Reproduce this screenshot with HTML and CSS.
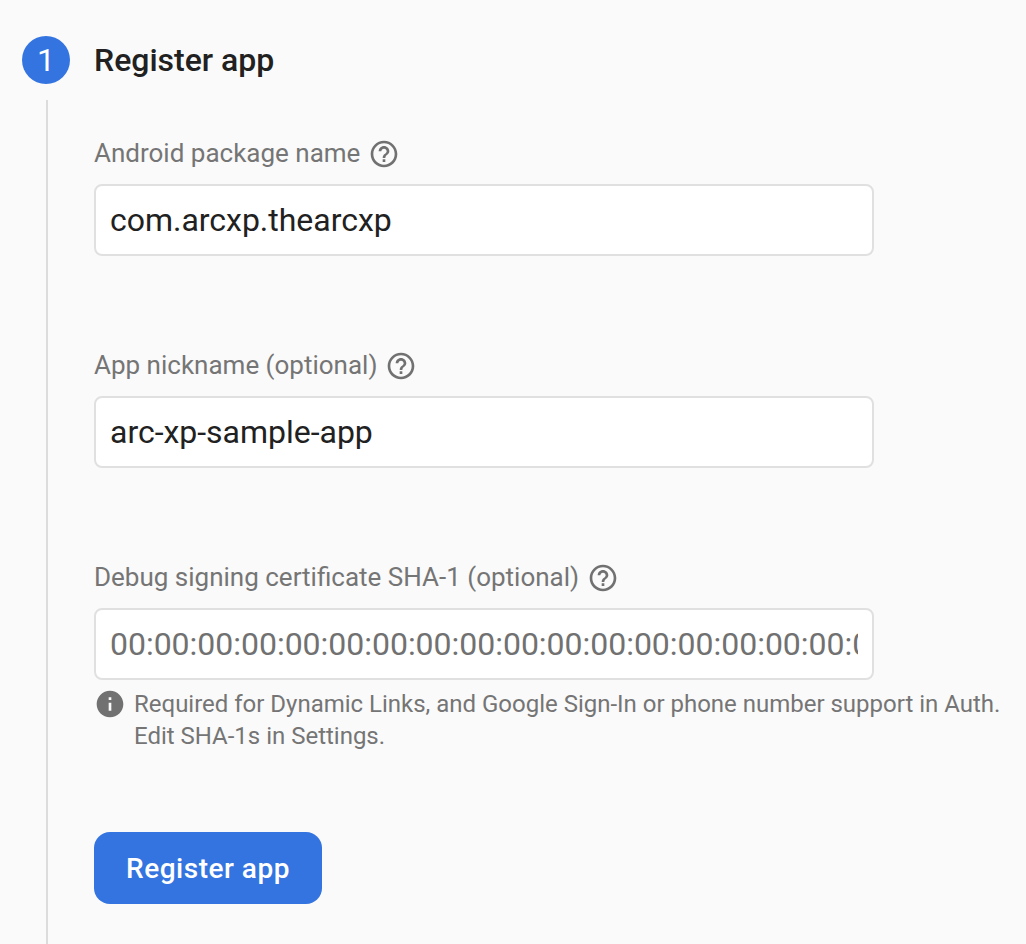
FILE: index.html
```
<!DOCTYPE html>
<html lang="en">
<head>
<meta charset="utf-8">
<title>Register app</title>
<link rel="stylesheet" href="styles.css">
</head>
<body>
<main class="step">
  <div class="rail">
    <span class="number">1</span>
    <span class="line"></span>
  </div>
  <form class="content">
    <h1 class="title">Register app</h1>
    <div class="field">
      <label class="label" for="pkg"><span class="label-text">Android package name</span>
        <svg class="help" viewBox="0 0 24 24"><path d="M11 18h2v-2h-2v2zm1-16C6.48 2 2 6.48 2 12s4.48 10 10 10 10-4.48 10-10S17.52 2 12 2zm0 18c-4.41 0-8-3.59-8-8s3.59-8 8-8 8 3.59 8 8-3.59 8-8 8zm0-14c-2.21 0-4 1.79-4 4h2c0-1.1.9-2 2-2s2 .9 2 2c0 2-3 1.75-3 5h2c0-2.25 3-2.5 3-5 0-2.21-1.79-4-4-4z"/></svg>
      </label>
      <input class="input" id="pkg" type="text" value="com.arcxp.thearcxp">
    </div>
    <div class="field">
      <label class="label" for="nick"><span class="label-text">App nickname (optional)</span>
        <svg class="help" viewBox="0 0 24 24"><path d="M11 18h2v-2h-2v2zm1-16C6.48 2 2 6.48 2 12s4.48 10 10 10 10-4.48 10-10S17.52 2 12 2zm0 18c-4.41 0-8-3.59-8-8s3.59-8 8-8 8 3.59 8 8-3.59 8-8 8zm0-14c-2.21 0-4 1.79-4 4h2c0-1.1.9-2 2-2s2 .9 2 2c0 2-3 1.75-3 5h2c0-2.25 3-2.5 3-5 0-2.21-1.79-4-4-4z"/></svg>
      </label>
      <input class="input" id="nick" type="text" value="arc-xp-sample-app">
    </div>
    <div class="field">
      <label class="label" for="sha"><span class="label-text">Debug signing certificate SHA-1 (optional)</span>
        <svg class="help" viewBox="0 0 24 24"><path d="M11 18h2v-2h-2v2zm1-16C6.48 2 2 6.48 2 12s4.48 10 10 10 10-4.48 10-10S17.52 2 12 2zm0 18c-4.41 0-8-3.59-8-8s3.59-8 8-8 8 3.59 8 8-3.59 8-8 8zm0-14c-2.21 0-4 1.79-4 4h2c0-1.1.9-2 2-2s2 .9 2 2c0 2-3 1.75-3 5h2c0-2.25 3-2.5 3-5 0-2.21-1.79-4-4-4z"/></svg>
      </label>
      <input class="input" id="sha" type="text" placeholder="00:00:00:00:00:00:00:00:00:00:00:00:00:00:00:00:00:00:00:00">
      <div class="hint">
        <svg class="info" viewBox="0 0 24 24"><path d="M12 2C6.48 2 2 6.48 2 12s4.48 10 10 10 10-4.48 10-10S17.52 2 12 2zm1 15h-2v-6h2v6zm0-8h-2V7h2v2z"/></svg>
        <p class="hint-text">Required for Dynamic Links, and Google Sign-In or phone number support in Auth.<br>Edit SHA-1s in Settings.</p>
      </div>
    </div>
    <button class="submit" type="button">Register app</button>
  </form>
</main>
</body>
</html>
```

FILE: styles.css
```
* { box-sizing: border-box; }
body {
  margin: 0;
  height: 944px;
  overflow: hidden;
  background: #fafafa;
  color: #212121;
  font-family: Roboto, sans-serif;
}
.step {
  display: flex;
  height: 944px;
  padding: 36px 0 0 22px;
}
.rail {
  display: flex;
  flex-direction: column;
  align-items: center;
  gap: 16px;
  width: 48px;
  margin-right: 24px;
}
.number {
  width: 48px;
  height: 48px;
  border-radius: 50%;
  background: #3474e0;
  color: #fff;
  font-size: 32px;
  font-weight: 400;
  line-height: 48px;
  text-align: center;
}
.line {
  flex: 1;
  width: 2px;
  margin-left: 2px;
  background: #dcdcdc;
}
.content { flex: 1; }
.title {
  margin: 0 0 52px;
  font-size: 32px;
  font-weight: 500;
  line-height: 48px;
}
.field { height: 212px; }
.label {
  display: flex;
  align-items: center;
  gap: 8px;
  height: 36px;
  margin-bottom: 12px;
  color: #757575;
  font-size: 26px;
  line-height: 36px;
}
.label-text { padding-bottom: 2px; }
.help { width: 32px; height: 32px; fill: #717171; }
.input {
  display: block;
  width: 780px;
  height: 72px;
  padding: 0 14px;
  border: 2px solid #e0e0e0;
  border-radius: 8px;
  background: #fff;
  color: #212121;
  font: 32px Roboto, sans-serif;
  letter-spacing: -0.02px;
}
.input::placeholder { color: #717171; }
.hint { display: flex; gap: 8px; margin-top: 8px; }
.info { flex: none; width: 32px; height: 32px; fill: #717171; }
.hint-text {
  margin: 0;
  color: #757575;
  font-size: 24px;
  letter-spacing: -0.01px;
  line-height: 32px;
  white-space: nowrap;
}
.submit {
  display: block;
  width: 228px;
  height: 72px;
  margin-top: 60px;
  padding: 0;
  border: 0;
  border-radius: 16px;
  background: #3474e0;
  color: #fff;
  font: 500 28px Roboto, sans-serif;
  letter-spacing: 0.5px;
}
```
